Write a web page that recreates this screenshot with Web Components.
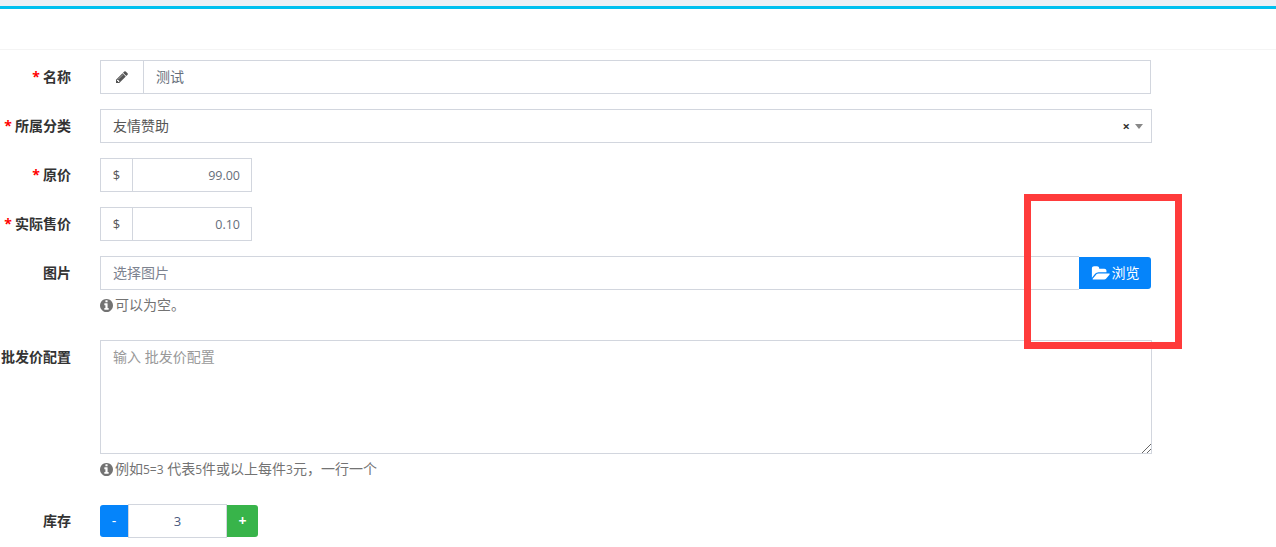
<!DOCTYPE html>
<html lang="zh">
<head>
<meta charset="utf-8">
<title>商品</title>
<style>
    html, body { margin: 0; padding: 0; background: #fff; overflow: hidden; }
    body {
        height: 547px;
        font: 14px/1.4 "Open Sans", "Noto Sans CJK SC", sans-serif;
        color: #666e7a;
    }
    .lat { font-size: 12px; }
    .num { font-size: 12.5px; }
</style>
</head>
<body>
<admin-page>
    <form-row label="名称" required>
        <text-box width="1051" addon-width="43" icon="pencil">测试</text-box>
    </form-row>
    <form-row label="所属分类" required>
        <select-box>友情赞助</select-box>
    </form-row>
    <form-row label="原价" required>
        <text-box width="152" addon-width="32" addon="$" align="right"><span class="num">99.00</span></text-box>
    </form-row>
    <form-row label="实际售价" required>
        <text-box width="152" addon-width="32" addon="$" align="right"><span class="num">0.10</span></text-box>
    </form-row>
    <form-row label="图片" gap="0">
        <file-box placeholder="选择图片" button="浏览"></file-box>
        <help-text>可以为空。</help-text>
    </form-row>
    <form-row label="批发价配置" gap="27" top="27">
        <area-box>输入 批发价配置</area-box>
        <help-text>例如<span class="lat">5=3</span> 代表<span class="lat">5</span>件或以上每件<span class="lat">3</span>元，一行一个</help-text>
    </form-row>
    <form-row label="库存" gap="0">
        <number-box value="3"></number-box>
    </form-row>
</admin-page>
<red-frame></red-frame>

<script>
const ICONS = {
    pencil: ['0 0 1792 1792', 'M491 1536l91-91-235-235-91 91v107h128v128h107zm523-928q0-22-22-22-10 0-17 7l-542 542q-7 7-7 17 0 22 22 22 10 0 17-7l542-542q7-7 7-17zm-54-192l416 416-832 832h-416v-416zm683 96q0 53-37 90l-166 166-416-416 166-165q36-38 90-38 53 0 91 38l235 234q37 39 37 91z'],
    folder: ['0 0 2048 1792', 'M1943 952q0 31-31 66l-336 396q-43 51-120.500 86.500t-143.500 35.500h-1088q-34 0-60.500-13t-26.500-43q0-31 31-66l336-396q43-51 120.500-86.500t143.500-35.500h1088q34 0 60.500 13t26.500 43zm-343-344v160h-832q-94 0-197 47.500t-164 119.500l-337 396-5 6q0-4-.5-12.500t-.5-12.500v-960q0-92 66-158t158-66h320q92 0 158 66t66 158v32h544q92 0 158 66t66 158z'],
    info: ['128 128 1536 1536', 'M1152 1376v-160q0-14-9-23t-23-9h-96v-512q0-14-9-23t-23-9h-320q-14 0-23 9t-9 23v160q0 14 9 23t23 9h96v320h-96q-14 0-23 9t-9 23v160q0 14 9 23t23 9h448q14 0 23-9t9-23zm-128-896v-160q0-14-9-23t-23-9h-192q-14 0-23 9t-9 23v160q0 14 9 23t23 9h192q14 0 23-9t9-23zm640 416q0 209-103 385.500t-279.500 279.500-385.500 103-385.500-103-279.500-279.500-103-385.500 103-385.500 279.500-279.500 385.500-103 385.500 103 279.500 279.500 103 385.500z']
};

function iconSvg(name, w, h) {
    const [box, d] = ICONS[name];
    return `<svg width="${w}" height="${h}" viewBox="${box}" fill="currentColor"><path d="${d}"/></svg>`;
}

class BaseElement extends HTMLElement {
    constructor() {
        super();
        this.attachShadow({ mode: 'open' });
    }

    connectedCallback() {
        this.shadowRoot.innerHTML = `<style>:host,*{box-sizing:border-box}${this.getStyles()}</style>${this.getTemplate()}`;
    }
}

class AdminPage extends BaseElement {
    getStyles() {
        return `
            :host { display: block; }
            .strip { height: 6px; background: #ecf0f5; }
            .top { height: 44px; border-top: 3px solid #00c0ef; border-bottom: 1px solid #f4f4f4; }
            .form { display: flex; flex-direction: column; padding-top: 10px; }
        `;
    }

    getTemplate() {
        return `<div class="strip"></div><div class="top"></div><div class="form"><slot></slot></div>`;
    }
}

class FormRow extends BaseElement {
    getStyles() {
        const gap = this.getAttribute('gap') ?? 15;
        const top = this.getAttribute('top') ?? 0;
        return `
            :host { display: flex; margin-top: ${top}px; margin-bottom: ${gap}px; }
            label {
                width: 71px;
                margin-right: 29px;
                padding-top: 7px;
                flex: none;
                line-height: 20px;
                text-align: right;
                font-weight: 700;
                color: #333;
                white-space: nowrap;
            }
            b { color: #f00; font-weight: 700; margin-right: 3px; }
            .body { flex: none; }
        `;
    }

    getTemplate() {
        const star = this.hasAttribute('required') ? '<b>*</b>' : '';
        return `<label>${star}${this.getAttribute('label')}</label><div class="body"><slot></slot></div>`;
    }
}

class TextBox extends BaseElement {
    getStyles() {
        const align = this.getAttribute('align') || 'left';
        return `
            :host { display: flex; height: 34px; width: ${this.getAttribute('width')}px; border: 1px solid #d2d6de; line-height: 32px; }
            .addon { width: ${this.getAttribute('addon-width')}px; flex: none; display: flex; align-items: center; justify-content: center; border-right: 1px solid #d2d6de; color: #555; font-size: 13px; }
            .value { flex: 1; padding: 0 11px 0 12px; text-align: ${align}; }
        `;
    }

    getTemplate() {
        const icon = this.getAttribute('icon');
        const addon = icon ? iconSvg(icon, 14, 14) : this.getAttribute('addon');
        return `<span class="addon">${addon}</span><span class="value"><slot></slot></span>`;
    }
}

class SelectBox extends BaseElement {
    getStyles() {
        return `
            :host { display: flex; align-items: center; height: 34px; width: 1052px; border: 1px solid #d2d6de; padding: 0 8px 0 12px; color: #555; }
            .value { flex: 1; }
            .clear { font-weight: 700; color: #333; font-size: 13px; margin-right: 5px; }
            .arrow { width: 0; height: 0; border: 4px solid transparent; border-top: 5px solid #888; border-bottom: 0; }
        `;
    }

    getTemplate() {
        return `<span class="value"><slot></slot></span><span class="clear">×</span><span class="arrow"></span>`;
    }
}

class FileBox extends BaseElement {
    getStyles() {
        return `
            :host { display: flex; height: 34px; width: 1051px; }
            .value { flex: 1; border: 1px solid #d2d6de; border-right: 0; padding: 0 12px; line-height: 32px; color: #7d8390; }
            button {
                width: 72px; height: 32px; margin-top: 1px; border: 0; border-radius: 0 3px 3px 0; padding: 0;
                background: #0584fa; color: #fff; font: inherit; font-size: 14px;
                display: flex; align-items: center; justify-content: center; gap: 1px;
            }
        `;
    }

    getTemplate() {
        return `<span class="value">${this.getAttribute('placeholder')}</span><button>${iconSvg('folder', 20, 17)}${this.getAttribute('button')}</button>`;
    }
}

class HelpText extends BaseElement {
    getStyles() {
        return `
            :host { display: flex; align-items: center; gap: 2px; height: 16px; margin-top: 7px; color: #737373; white-space: nowrap; }
            svg { flex: none; }
        `;
    }

    getTemplate() {
        return `${iconSvg('info', 13, 13)}<span><slot></slot></span>`;
    }
}

class AreaBox extends BaseElement {
    getStyles() {
        return `
            :host { display: block; position: relative; width: 1052px; height: 114px; border: 1px solid #d2d6de; padding: 6px 12px; line-height: 20px; color: #999; }
            svg { position: absolute; right: 0; bottom: 0; }
        `;
    }

    getTemplate() {
        return `<slot></slot><svg width="10" height="10" viewBox="0 0 10 10" stroke="#666" fill="none"><path d="M1 10 10 1M6 10l4-4"/></svg>`;
    }
}

class NumberBox extends BaseElement {
    getStyles() {
        return `
            :host { display: flex; height: 34px; }
            .btn { height: 32px; margin-top: 1px; display: flex; align-items: center; justify-content: center; color: #fff; font-weight: 700; }
            .minus { width: 28px; background: #0584fa; border-radius: 3px 0 0 3px; font-weight: 400; }
            .plus { width: 31px; background: #38b44a; border-radius: 0 3px 3px 0; }
            .value { width: 99px; border: 1px solid #d2d6de; text-align: center; line-height: 32px; color: #4a5a80; font-size: 13px; }
        `;
    }

    getTemplate() {
        return `<span class="btn minus">-</span><span class="value">${this.getAttribute('value')}</span><span class="btn plus">+</span>`;
    }
}

// annotation drawn over the screenshot
class RedFrame extends BaseElement {
    getStyles() {
        return `
            :host { position: absolute; left: 1024px; top: 194px; width: 158px; height: 155px; border: 7px solid #ff3b3b; }
        `;
    }

    getTemplate() {
        return '';
    }
}

customElements.define('admin-page', AdminPage);
customElements.define('form-row', FormRow);
customElements.define('text-box', TextBox);
customElements.define('select-box', SelectBox);
customElements.define('file-box', FileBox);
customElements.define('help-text', HelpText);
customElements.define('area-box', AreaBox);
customElements.define('number-box', NumberBox);
customElements.define('red-frame', RedFrame);
</script>
</body>
</html>
